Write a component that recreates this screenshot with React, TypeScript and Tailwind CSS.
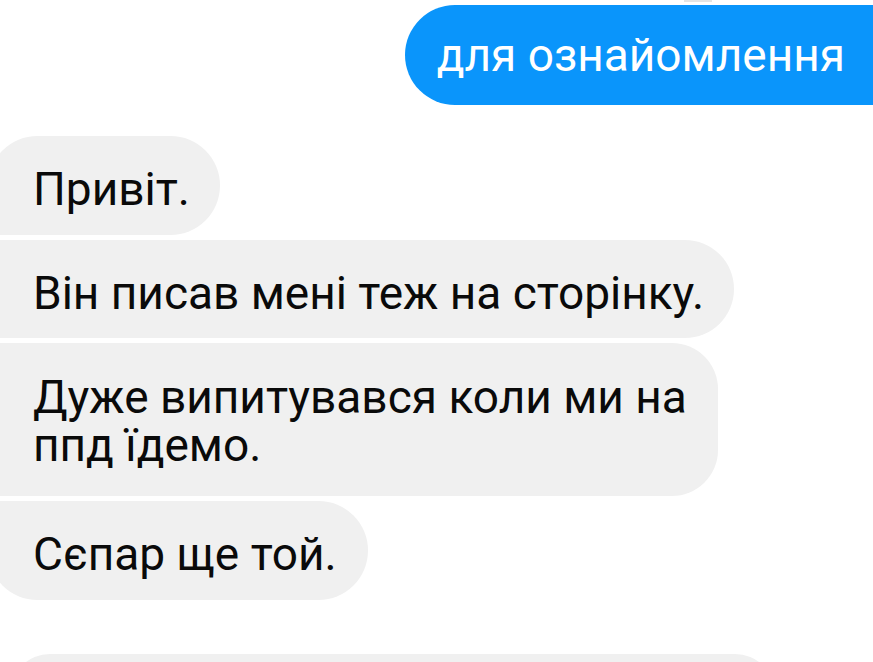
export default function App() {
  const grey = 'bg-[#f0f0f0] text-[#0a0a0a]';

  return (
    <div className="relative h-[662px] w-[873px] overflow-hidden bg-white font-['Roboto',sans-serif]">
      <div className="absolute left-[684px] top-0 h-[2px] w-[28px] bg-[#e4e4e4]" />

      <div className="flex flex-col pt-[5px]">
        <div className="flex justify-end">
          <div className="mr-[-60px] flex h-[100px] items-center rounded-[50px] bg-[#0a95fb] pl-[32px] pr-[88px] text-[46px] text-white">
            для ознайомлення
          </div>
        </div>

        <div className="mt-[31px] flex flex-col items-start gap-[5px] text-[46px] leading-[48px]">
          <div className={`${grey} ml-[-12px] rounded-l-[8px] rounded-tl-[50px] rounded-r-[50px] pb-[22px] pl-[45px] pr-[30px] pt-[29px]`}>
            Привіт.
          </div>
          <div className={`${grey} ml-[-12px] rounded-l-[8px] rounded-r-[50px] pb-[21px] pl-[45px] pr-[30px] pt-[29px]`}>
            Він писав мені теж на сторінку.
          </div>
          <div className={`${grey} ml-[-12px] w-[730px] rounded-l-[8px] rounded-r-[46px] pb-[27px] pl-[45px] pr-[20px] pt-[30px]`}>
            Дуже випитувався коли ми на ппд їдемо.
          </div>
          <div className={`${grey} ml-[-12px] rounded-l-[8px] rounded-bl-[50px] rounded-r-[50px] pb-[22px] pl-[45px] pr-[31px] pt-[29px]`}>
            Сєпар ще той.
          </div>
        </div>

        <div className={`${grey} ml-[10px] mt-[54px] h-[100px] w-[765px] rounded-[40px]`} />
      </div>
    </div>
  );
}
